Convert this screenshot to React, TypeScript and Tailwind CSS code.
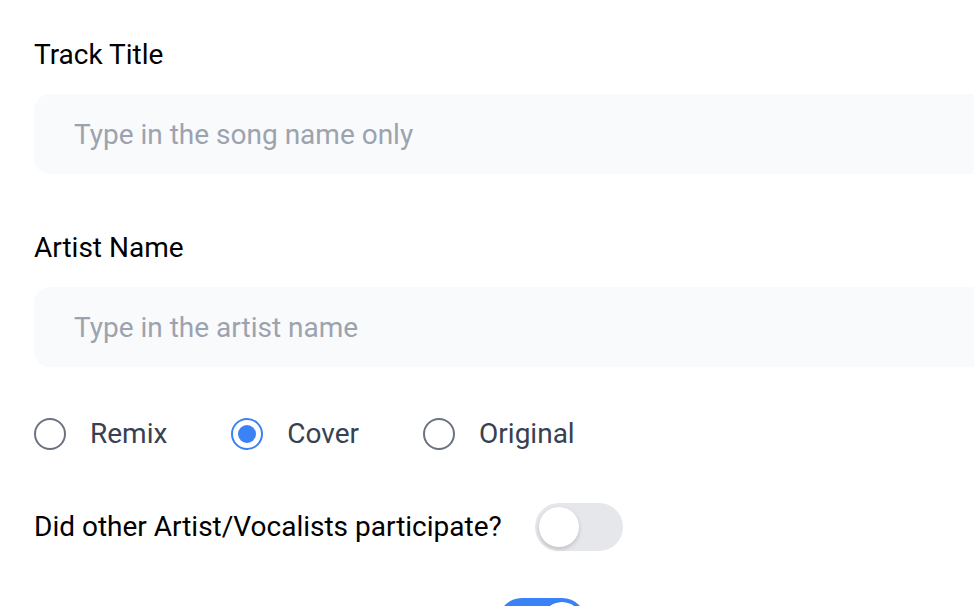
import React, { useState } from 'react';

const TYPES = ['Remix', 'Cover', 'Original'];

function Toggle({ on, onChange }: { on: boolean; onChange: () => void }) {
  return (
    <button
      type="button"
      onClick={onChange}
      className={`relative shrink-0 w-[88px] h-[48px] rounded-full transition-colors ${on ? 'bg-[#3b82f6]' : 'bg-[#e5e7eb]'}`}
    >
      <span
        className={`absolute top-[4px] w-[40px] h-[40px] rounded-full bg-white shadow-[0_2px_4px_rgba(0,0,0,0.18)] transition-all ${on ? 'left-[44px]' : 'left-[4px]'}`}
      />
    </button>
  );
}

export default function App() {
  const [type, setType] = useState('Cover');
  const [others, setOthers] = useState(false);
  const [explicit, setExplicit] = useState(true);

  return (
    <div className="w-[974px] h-[606px] overflow-hidden bg-white pl-[34px] pt-[35px] font-['Roboto',sans-serif]">
      {/* Track title */}
      <label className="block text-[28px] leading-[40px] text-black">Track Title</label>
      <input
        placeholder="Type in the song name only"
        className="mt-[19px] w-[1000px] h-[80px] rounded-[16px] bg-[#f9fafb] px-[40px] text-[28px] text-[#111827] placeholder:text-[#9ca3af] outline-none"
      />

      {/* Artist */}
      <label className="block mt-[54px] text-[28px] leading-[40px] text-black">Artist Name</label>
      <input
        placeholder="Type in the artist name"
        className="mt-[19px] w-[1000px] h-[80px] rounded-[16px] bg-[#f9fafb] px-[40px] text-[28px] text-[#111827] placeholder:text-[#9ca3af] outline-none"
      />

      {/* Release type */}
      <div className="mt-[47px] flex items-center gap-[64px]">
        {TYPES.map(t => (
          <label key={t} className="flex items-center gap-[24px] cursor-pointer" onClick={() => setType(t)}>
            <span
              className={`w-[32px] h-[32px] rounded-full border-2 flex items-center justify-center ${type === t ? 'border-[#3b82f6]' : 'border-[#6b7280]'}`}
            >
              {type === t && <span className="w-[18px] h-[18px] rounded-full bg-[#3b82f6]" />}
            </span>
            <span className="text-[28px] leading-[40px] text-[#374151]">{t}</span>
          </label>
        ))}
      </div>

      {/* Toggles */}
      <div className="mt-[49px] flex items-center gap-[33px]">
        <span className="text-[28px] leading-[40px] text-black">Did other Artist/Vocalists participate?</span>
        <Toggle on={others} onChange={() => setOthers(!others)} />
      </div>
      <div className="mt-[47px] flex items-center gap-[33px]">
        <span className="w-[431px] shrink-0 text-[28px] leading-[40px] text-black">Explicit lyrics?</span>
        <Toggle on={explicit} onChange={() => setExplicit(!explicit)} />
      </div>
    </div>
  );
}
